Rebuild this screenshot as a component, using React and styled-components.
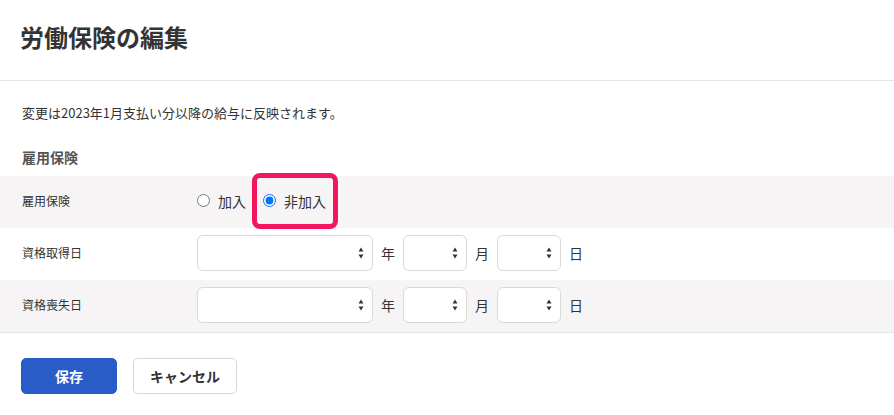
import React, { useState } from 'react'
import styled, { createGlobalStyle } from 'styled-components'

const GlobalStyle = createGlobalStyle`
  body {
    margin: 0;
    background: #fff;
    color: #333;
    font-family: "Noto Sans CJK JP", "Noto Sans", sans-serif;
  }
`

const Page = styled.div`
  width: 100%;
`

const Header = styled.header`
  box-sizing: border-box;
  height: 81px;
  padding: 19px 20px 0;
  border-bottom: 1px solid #e6e6e6;
`

const Title = styled.h1`
  margin: 0;
  font-size: 24px;
  line-height: 36px;
  font-weight: 700;
  color: #333;
`

const Notice = styled.p`
  margin: 22px 22px 0;
  font-size: 13px;
  line-height: 20px;
`

const SectionTitle = styled.h2`
  margin: 24px 22px 9px;
  font-size: 14px;
  line-height: 20px;
  font-weight: 700;
  color: #555;
`

const Rows = styled.div`
  border-bottom: 1px solid #e6e6e6;
`

const Row = styled.div`
  display: flex;
  align-items: center;
  height: 52px;
  padding-bottom: 3px;
  box-sizing: border-box;
  background: ${props => (props.shaded ? '#f6f4f5' : '#fff')};
`

const Label = styled.div`
  box-sizing: border-box;
  width: 197px;
  padding-left: 22px;
  font-size: 12px;
  line-height: 18px;
`

const RadioGroup = styled.div`
  display: flex;
  align-items: center;
  gap: 17px;
`

const Option = styled.label`
  position: relative;
  display: flex;
  align-items: center;
  gap: 8px;
  font-size: 14px;
  line-height: 20px;
  cursor: pointer;
`

const Radio = styled.input`
  margin: 0;
  width: 13px;
  height: 13px;
`

const Highlight = styled.span`
  position: absolute;
  top: -18px;
  bottom: -18px;
  left: -11px;
  right: -12px;
  border: 5px solid #f4165d;
  border-radius: 8px;
  pointer-events: none;
`

const DateFields = styled.div`
  display: flex;
  align-items: center;
`

const SelectWrap = styled.div`
  position: relative;
  width: ${props => props.width}px;
  height: 36px;
`

const Select = styled.select`
  appearance: none;
  box-sizing: border-box;
  width: 100%;
  height: 100%;
  border: 1px solid #d9d9d9;
  border-radius: 6px;
  background: #fff;
  font: inherit;
  font-size: 14px;
  color: #333;
  padding: 0 24px 0 10px;
`

const Arrows = styled.svg`
  position: absolute;
  right: 9px;
  top: 12px;
  pointer-events: none;
`

const Unit = styled.span`
  margin: 0 8px;
  font-size: 14px;
`

const Footer = styled.div`
  display: flex;
  gap: 16px;
  padding: 25px 21px;
`

const Button = styled.button`
  box-sizing: border-box;
  height: 36px;
  width: ${props => props.width}px;
  border-radius: 5px;
  font: inherit;
  font-size: 14px;
  font-weight: 700;
  cursor: pointer;
  border: 1px solid ${props => (props.primary ? '#2a5cc8' : '#d6d6d6')};
  background: ${props => (props.primary ? '#2a5cc8' : '#fff')};
  color: ${props => (props.primary ? '#fff' : '#333')};
`

const DateSelect = ({ width }) => (
  <SelectWrap width={width}>
    <Select defaultValue="">
      <option value=""></option>
    </Select>
    <Arrows width="6" height="12" viewBox="0 0 6 12">
      <path d="M3 0.5 L5.5 4.5 L0.5 4.5 Z" fill="#333" />
      <path d="M3 11.5 L5.5 7.5 L0.5 7.5 Z" fill="#333" />
    </Arrows>
  </SelectWrap>
)

const DateRow = ({ label, shaded }) => (
  <Row shaded={shaded}>
    <Label>{label}</Label>
    <DateFields>
      <DateSelect width={176} />
      <Unit>年</Unit>
      <DateSelect width={64} />
      <Unit>月</Unit>
      <DateSelect width={64} />
      <Unit>日</Unit>
    </DateFields>
  </Row>
)

export default function App() {
  const [insured, setInsured] = useState('no')

  return (
    <Page>
      <GlobalStyle />
      <Header>
        <Title>労働保険の編集</Title>
      </Header>
      <Notice>変更は2023年1月支払い分以降の給与に反映されます。</Notice>
      <SectionTitle>雇用保険</SectionTitle>
      <Rows>
        <Row shaded>
          <Label>雇用保険</Label>
          <RadioGroup>
            <Option>
              <Radio
                type="radio"
                name="koyo"
                checked={insured === 'yes'}
                onChange={() => setInsured('yes')}
              />
              加入
            </Option>
            <Option>
              <Radio
                type="radio"
                name="koyo"
                checked={insured === 'no'}
                onChange={() => setInsured('no')}
              />
              非加入
              <Highlight />
            </Option>
          </RadioGroup>
        </Row>
        <DateRow label="資格取得日" />
        <DateRow label="資格喪失日" shaded />
      </Rows>
      <Footer>
        <Button primary width={96}>保存</Button>
        <Button width={104}>キャンセル</Button>
      </Footer>
    </Page>
  )
}
